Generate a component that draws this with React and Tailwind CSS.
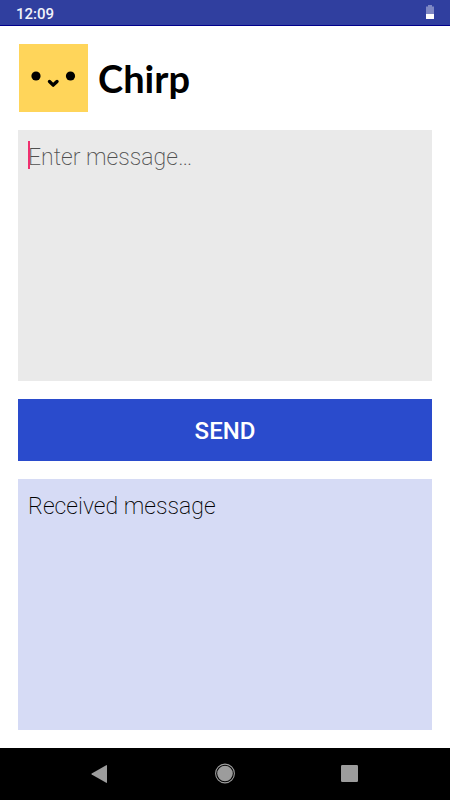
import React, { useState } from 'react';

function StatusBar() {
    return (
        <div className="flex h-[26px] items-center justify-between border-b border-[#00008c] bg-[#303f9f] pr-[15px] pl-4">
            <span className="pt-[2px] text-[15px] leading-6 font-medium text-[#f1f2fa]">12:09</span>
            <svg width="10" height="15" viewBox="0 0 10 15" aria-label="Battery">
                <path d="M3 0h4v1.5h2V9H1V1.5h2z" fill="#7f88c4" />
                <path d="M1 9h8v4.5a.5.5 0 0 1-.5.5h-7a.5.5 0 0 1-.5-.5z" fill="#fff" />
            </svg>
        </div>
    );
}

function Logo() {
    return (
        <header className="flex h-[68px] items-center gap-[10px] pl-px">
            <svg className="shrink-0" width="69" height="68" viewBox="0 0 69 68" aria-hidden="true">
                <rect width="69" height="68" fill="#ffd55a" />
                <circle cx="17" cy="32" r="4.6" fill="#000" />
                <circle cx="51.5" cy="32" r="4.6" fill="#000" />
                <path
                    d="M30.5 37.5l3.7 3.6 3.8-3.6"
                    fill="none"
                    stroke="#000"
                    strokeWidth="3.4"
                    strokeLinecap="round"
                    strokeLinejoin="round"
                />
            </svg>
            <h1 className="font-['Lato',sans-serif] text-[38px] leading-[40px] font-bold text-black">Chirp</h1>
        </header>
    );
}

function NavigationBar() {
    return (
        <nav className="grid h-[52px] grid-cols-[1fr_26px_1fr] items-center bg-black px-[90px] text-[#9c9c9c]">
            <button type="button" aria-label="Back" className="justify-self-start">
                <svg width="20" height="20" viewBox="0 0 20 20" fill="currentColor">
                    <path d="M16.2 1.2q.8-.4.8.5v16.6q0 .9-.8.5L1.7 10.5q-.8-.5 0-1z" />
                </svg>
            </button>
            <button type="button" aria-label="Home" className="justify-self-center">
                <svg width="22" height="22" viewBox="0 0 22 22">
                    <circle cx="11" cy="10.5" r="9.4" fill="none" stroke="currentColor" strokeWidth="1.1" />
                    <circle cx="11" cy="10.5" r="7.8" fill="currentColor" />
                </svg>
            </button>
            <button type="button" aria-label="Recent apps" className="justify-self-end">
                <svg width="20" height="20" viewBox="0 0 20 20" fill="currentColor">
                    <rect x="1" y="1" width="17" height="17" rx="1.2" />
                </svg>
            </button>
        </nav>
    );
}

export default function App() {
    const [message, setMessage] = useState('');
    const [received, setReceived] = useState('Received message');
    const [isFocused, setIsFocused] = useState(false);

    const handleSend = () => {
        if (message) {
            setReceived(message);
            setMessage('');
        }
    };

    return (
        <div className="flex min-h-screen flex-col bg-white font-['Roboto',sans-serif]">
            <StatusBar />

            <main className="grid flex-1 grid-rows-[auto_1fr_auto_1fr] gap-[18px] p-[18px]">
                <Logo />

                <div className="relative flex">
                    <textarea
                        aria-label="Message"
                        placeholder="Enter message…"
                        value={message}
                        onChange={(event) => setMessage(event.target.value)}
                        onFocus={() => setIsFocused(true)}
                        onBlur={() => setIsFocused(false)}
                        className="w-full resize-none bg-[#eaeaea] px-[10px] py-3 text-[23px] leading-[32px] font-extralight text-black caret-[#ff4081] outline-none placeholder:text-[#505050]"
                    />
                    {/* caret shown before the field has been touched */}
                    {!message && !isFocused && (
                        <span className="pointer-events-none absolute top-[11px] left-[10px] h-7 w-[2px] bg-[#f0306f]" />
                    )}
                </div>

                <button
                    type="button"
                    onClick={handleSend}
                    className="h-[62px] bg-[#2a4bcc] pt-[2px] text-2xl font-medium text-white"
                >
                    SEND
                </button>

                <output
                    aria-label="Received message"
                    className="block bg-[#d6dbf5] px-[10px] py-3 text-[23px] leading-[32px] font-extralight text-black"
                >
                    {received}
                </output>
            </main>

            <NavigationBar />
        </div>
    );
}
